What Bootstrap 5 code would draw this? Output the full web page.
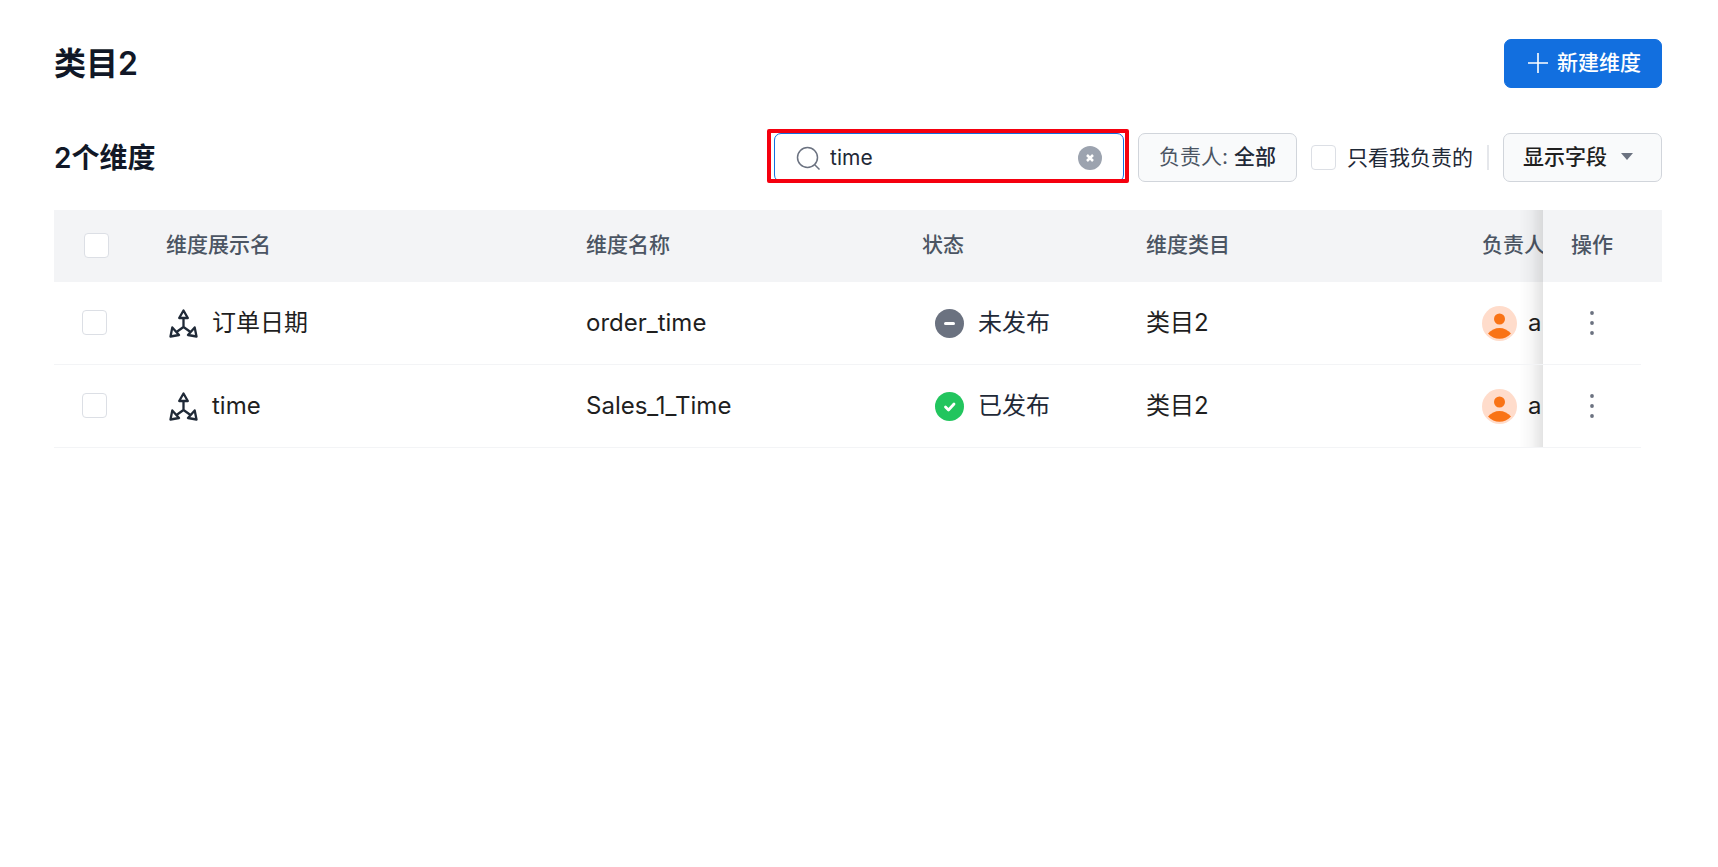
<!DOCTYPE html>
<html lang="zh-CN">
<head>
<meta charset="utf-8">
<meta name="viewport" content="width=device-width, initial-scale=1">
<title>类目2</title>
<link rel="stylesheet" href="https://cdn.jsdelivr.net/npm/bootstrap@5.3.0/dist/css/bootstrap.min.css">
<style>
body { font-family: Inter, "Noto Sans CJK SC", sans-serif; font-size: 21px; line-height: 32px; color: #1f2937; background: #fff; }
.page { padding: 39px 56px 39px 54px; }
.page-title { font-size: 32px; line-height: 48px; font-weight: 500; color: #111827; }
.page-count { font-size: 28px; line-height: 48px; font-weight: 500; color: #111827; }
.page-title, .page-count { font-weight: 600; }
.toolbar { margin-top: 45px; margin-bottom: 28px; }
.tool-btn { height: 49px; padding: 0 20px; font-size: 21px; line-height: 30px; border-radius: 7px; font-weight: 500; white-space: nowrap; }
.btn-create { --bs-btn-bg: #126fdf; --bs-btn-border-color: #126fdf; padding: 0 20px 2px 22px; }
.btn-plain { --bs-btn-bg: #f9fafb; --bs-btn-border-color: #d1d5db; --bs-btn-color: #1f2937; --bs-btn-hover-bg: #f3f4f6; --bs-btn-hover-border-color: #d1d5db; padding-bottom: 2px; }
.btn-plain .prefix { color: #4b5563; font-weight: 400; }
.btn-fields { --bs-btn-color: #1f1f1f; width: 159px; padding-left: 19px; }
.search-box { width: 350px; height: 49px; margin-right: 14px; padding: 0 21px; border: 1px solid #126fdf; border-radius: 7px; }
.search-box::after { content: ""; position: absolute; inset: -5px -6px -2px -8px; border: 4px solid #f5000f; border-radius: 2px; pointer-events: none; }
.search-box input { font-size: 21px; line-height: 32px; color: #1f2937; margin-left: 10px; min-width: 0; }
.search-box input:focus { outline: 0; }
.only-mine { gap: 11px; margin-left: 14px; }
.form-check-input.tick { width: 25px; height: 25px; margin: 0; border: 1px solid #dcdfe5; border-radius: 4px; flex: none; }
.rule { width: 2px; height: 25px; background: #e5e7eb; margin: 0 14px; }
.grid-scroll { overflow-x: hidden; }
.grid { table-layout: fixed; width: 100%; min-width: 1744px; border-collapse: separate; border-spacing: 0; }
.grid th { height: 72px; padding: 0 28px 2px; background: #f3f4f6; color: #4b5563; font-weight: 500; }
.grid td { height: 83px; padding: 0 28px; border-bottom: 1px solid #f3f4f6; background: #fff; font-size: 24px; color: #1f1f1f; }
.grid .pick { padding-right: 0; padding-bottom: 2px; }
.grid th.pick { padding-left: 30px; }
.grid .state { padding-left: 41px; color: #1f2937; }
.grid .stick { position: sticky; right: 0; z-index: 1; }
.grid td.stick { right: 21px; padding: 0; }
.grid td.gutter { position: sticky; right: 0; padding: 0; border: 0; }
.grid .stick::before { content: ""; position: absolute; top: 0; bottom: 0; left: -24px; width: 24px; background: linear-gradient(to right, transparent, rgba(0,0,0,.03) 50%, rgba(0,0,0,.11)); pointer-events: none; }
.gap-icon { gap: 14px; }
.gap-owner { gap: 11px; }
.named { padding-left: 3px; }
svg { display: block; flex: none; }
</style>
</head>
<body>
<svg width="0" height="0" class="position-absolute" aria-hidden="true">
  <symbol id="axes" viewBox="0 0 29 29"><g fill="none" stroke="#1f2937" stroke-width="2.300" stroke-linejoin="round"><path d="M14.500 9v9M14.500 18l-7 5M14.500 18l7 5"/><path d="M14.500 1.500l4.300 7.500h-8.600zM1.500 27.500l1.800-9 6.700 7.500zM27.500 27.500l-1.800-9-6.700 7.500z" fill="#fff"/></g></symbol>
  <symbol id="person" viewBox="0 0 35 35"><circle cx="17.500" cy="17.500" r="17.500" fill="#ffdccb"/><circle cx="17.500" cy="13" r="5.500" fill="#f97316"/><path d="M6 27.500c6-7.500 17-7.500 23 0-6 7-17 7-23 0z" fill="#f97316"/></symbol>
  <symbol id="dots" viewBox="0 0 6 28"><g fill="#6b7280"><circle cx="3" cy="4" r="1.900"/><circle cx="3" cy="14" r="1.900"/><circle cx="3" cy="24" r="1.900"/></g></symbol>
</svg>
<main class="page">
  <header class="d-flex justify-content-between align-items-center">
    <h1 class="page-title mb-0">类目2</h1>
    <button type="button" class="btn btn-primary btn-create tool-btn d-flex align-items-center gap-2">
      <svg width="22" height="22" viewBox="0 0 22 22" fill="none" stroke="#fff" stroke-width="1.600" aria-hidden="true"><path d="M11 1v20M1 11h20"/></svg>新建维度</button>
  </header>
  <div class="toolbar d-flex justify-content-between align-items-center">
    <h2 class="page-count mb-0">2个维度</h2>
    <div class="d-flex align-items-center">
      <div class="search-box position-relative d-flex align-items-center">
        <svg width="24" height="24" viewBox="0 0 24 24" fill="none" stroke="#6b7280" stroke-width="1.500" aria-hidden="true"><circle cx="11.500" cy="11.500" r="10"/><path d="M18.500 18.500l5 5"/></svg>
        <input type="text" class="border-0 p-0 flex-grow-1 bg-transparent" value="time" aria-label="搜索">
        <button type="button" class="border-0 p-0 bg-transparent" aria-label="清除"><svg width="24" height="24" viewBox="0 0 24 24"><circle cx="12" cy="12" r="12" fill="#9ca3af"/><path d="M9 9l6 6M15 9l-6 6" stroke="#fff" stroke-width="2.500"/></svg></button>
      </div>
      <button type="button" class="btn btn-plain tool-btn"><span class="prefix">负责人: </span>全部</button>
      <label class="only-mine d-flex align-items-center"><input type="checkbox" class="form-check-input tick"><span>只看我负责的</span></label>
      <span class="rule"></span>
      <button type="button" class="btn btn-plain btn-fields tool-btn d-flex align-items-center gap-icon">显示字段<svg width="12" height="8" viewBox="0 0 12 8" aria-hidden="true"><path d="M0 0h12L6 7z" fill="#6b7280"/></svg></button>
    </div>
  </div>
  <div class="grid-scroll">
    <table class="grid text-nowrap align-middle">
      <colgroup><col width="84"><col width="420"><col width="336"><col width="224"><col width="336"><col width="225"><col width="98"><col width="21"></colgroup>
      <thead>
        <tr><th class="pick"><input type="checkbox" class="form-check-input tick d-block" aria-label="全选"></th><th>维度展示名</th><th>维度名称</th><th>状态</th><th>维度类目</th><th>负责人</th><th class="stick" colspan="2">操作</th></tr>
      </thead>
      <tbody>
        <tr>
          <td class="pick"><input type="checkbox" class="form-check-input tick d-block" aria-label="选择订单日期"></td>
          <td><div class="named d-flex align-items-center gap-icon"><svg width="29" height="29"><use href="#axes"/></svg>订单日期</div></td>
          <td>order_time</td>
          <td class="state"><div class="d-flex align-items-center gap-icon"><svg width="29" height="29" viewBox="0 0 29 29"><circle cx="14.500" cy="14.500" r="14.500" fill="#6b7280"/><path d="M10.500 14.500h8" stroke="#fff" stroke-width="3" stroke-linecap="round"/></svg>未发布</div></td>
          <td>类目2</td>
          <td><div class="d-flex align-items-center gap-owner"><svg width="35" height="35"><use href="#person"/></svg>a</div></td>
          <td class="stick"><button type="button" class="border-0 bg-transparent p-0 d-block mx-auto" aria-label="更多操作"><svg width="6" height="28"><use href="#dots"/></svg></button></td>
          <td class="gutter"></td>
        </tr>
        <tr>
          <td class="pick"><input type="checkbox" class="form-check-input tick d-block" aria-label="选择time"></td>
          <td><div class="named d-flex align-items-center gap-icon"><svg width="29" height="29"><use href="#axes"/></svg>time</div></td>
          <td>Sales_1_Time</td>
          <td class="state"><div class="d-flex align-items-center gap-icon"><svg width="29" height="29" viewBox="0 0 29 29"><circle cx="14.500" cy="14.500" r="14.500" fill="#22c55e"/><path d="M10.500 15l3 3 5.500-6" fill="none" stroke="#fff" stroke-width="2.800" stroke-linecap="round" stroke-linejoin="round"/></svg>已发布</div></td>
          <td>类目2</td>
          <td><div class="d-flex align-items-center gap-owner"><svg width="35" height="35"><use href="#person"/></svg>a</div></td>
          <td class="stick"><button type="button" class="border-0 bg-transparent p-0 d-block mx-auto" aria-label="更多操作"><svg width="6" height="28"><use href="#dots"/></svg></button></td>
          <td class="gutter"></td>
        </tr>
      </tbody>
    </table>
  </div>
</main>
<script src="https://cdn.jsdelivr.net/npm/bootstrap@5.3.0/dist/js/bootstrap.bundle.min.js"></script>
</body>
</html>
